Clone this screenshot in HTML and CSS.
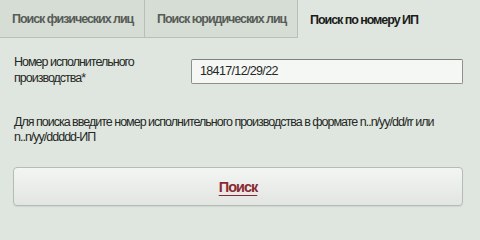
FILE: index.html
```html
<!DOCTYPE html>
<html lang="ru">
<head>
<meta charset="utf-8">
<link rel="stylesheet" href="styles.css">
</head>
<body>
<div class="panel">
  <div class="tabs">
    <div class="tab">Поиск физических лиц</div>
    <div class="tab tab-wide">Поиск юридических лиц</div>
    <div class="tab active">Поиск по номеру ИП</div>
  </div>
  <div class="content">
    <div class="row">
      <label class="label">Номер исполнительного<br>производства*</label>
      <div class="input">18417/12/29/22</div>
    </div>
    <p class="help">Для поиска введите номер исполнительного производства в формате n..n/yy/dd/rr или<br>n..n/yy/ddddd-ИП</p>
    <div class="button"><span class="btn-text">Поиск</span></div>
  </div>
</div>
</body>
</html>
```
FILE: styles.css
```css
html, body {
  margin: 0;
  padding: 0;
}
body {
  width: 480px;
  height: 213px;
  overflow: hidden;
  background: #dfe6df;
  font-family: "Liberation Sans", Arial, sans-serif;
  font-size: 12.5px;
  letter-spacing: -1px;
  color: #252825;
}
.panel {
  display: flex;
  flex-direction: column;
}
.tabs {
  display: flex;
  height: 38px;
}
.tab {
  box-sizing: border-box;
  width: 145px;
  padding: 1px 0 0 12px;
  background: #d5ddd5;
  border-right: 1px solid #b7bfb7;
  border-bottom: 1px solid #b7bfb7;
  color: #575c57;
  font-weight: bold;
  letter-spacing: -1.05px;
  display: flex;
  align-items: center;
  white-space: nowrap;
}
.tab-wide {
  width: 153px;
}
.tab.active {
  flex: 1;
  background: #dfe6df;
  border: none;
  color: #1a1c1a;
}
.content {
  display: flex;
  flex-direction: column;
  padding: 0 17px 0 13px;
}
.row {
  display: flex;
  align-items: center;
  margin-top: 16px;
}
.label {
  width: 177px;
  padding-left: 1px;
  line-height: 16px;
}
.input {
  flex: 1;
  box-sizing: border-box;
  height: 25px;
  margin-top: 3px;
  padding-left: 8px;
  border: 1px solid #8c918c;
  border-top-color: #7d827d;
  border-radius: 2px;
  background: #f5f7f5;
  line-height: 23px;
  letter-spacing: -0.65px;
  color: #252825;
}
.help {
  margin: 29px 0 0 1px;
  line-height: 15px;
}
.button {
  box-sizing: border-box;
  height: 39px;
  margin-top: 22px;
  border: 1px solid #b5bcb5;
  border-radius: 4px;
  background: linear-gradient(#f3f5f3, #e2e5e2);
  box-shadow: 0 1px 1px rgba(0, 0, 0, 0.07);
  display: flex;
  align-items: center;
  justify-content: center;
}
.btn-text {
  color: #8a2932;
  font-size: 14.5px;
  font-weight: bold;
  letter-spacing: -1px;
  text-decoration: underline;
  text-underline-offset: 3px;
  text-decoration-thickness: 1px;
}
```
